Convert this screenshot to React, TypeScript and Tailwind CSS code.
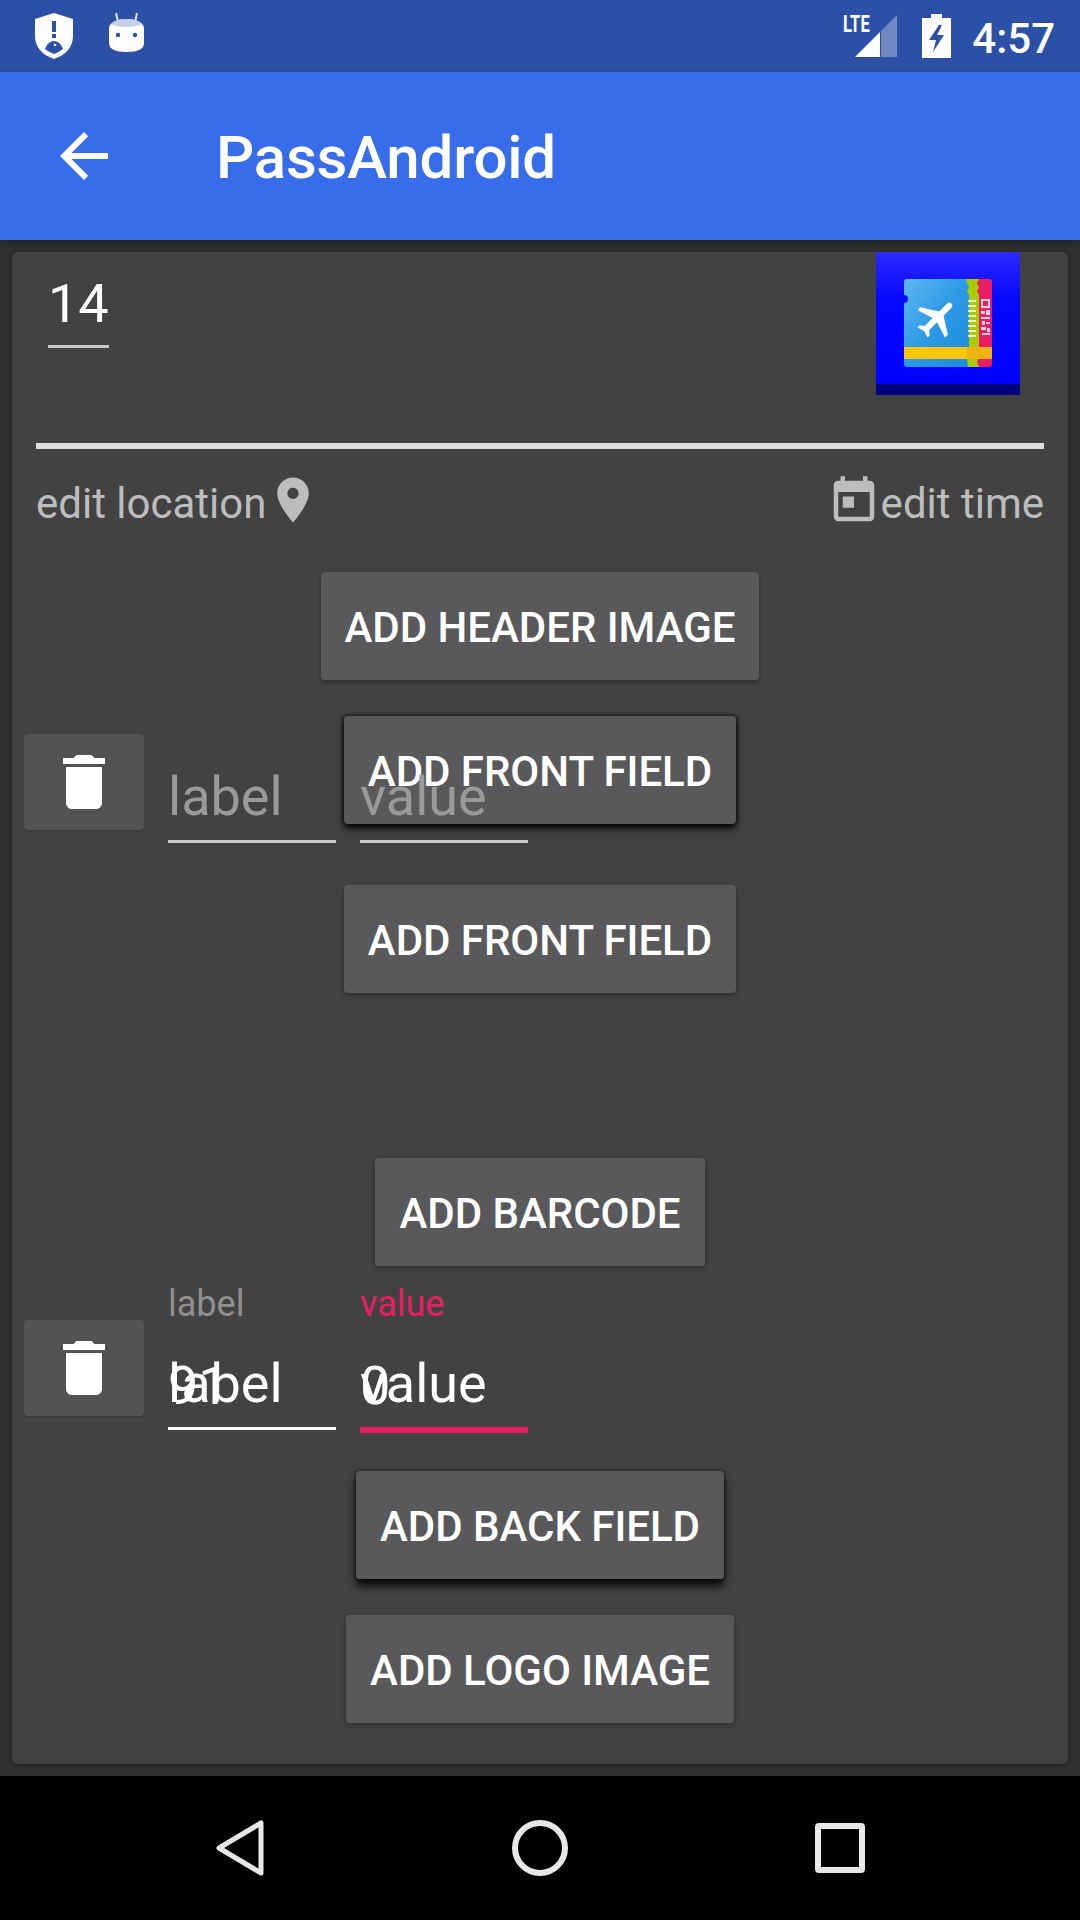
const ActionButton = ({ label, shadow, className = '' }: { label: string; shadow?: string; className?: string }) => (
  <div
    className={`flex h-[108px] items-center justify-center rounded-[4px] bg-[#59595b] px-6 pt-1 text-[42px] font-medium leading-none tracking-[-0.03px] text-white ${
      shadow ?? 'shadow-[0_2px_5px_rgba(0,0,0,0.3)]'
    } ${className}`}
  >
    {label}
  </div>
);

const TrashButton = ({ className = '' }: { className?: string }) => (
  <div className={`flex h-[96px] w-[120px] shrink-0 items-center justify-center rounded-[4px] bg-[#535355] shadow-[0_1px_2px_rgba(0,0,0,0.15)] ${className}`}>
    <svg viewBox="0 0 24 24" className="h-[72px] w-[72px] fill-white">
      <path d="M6 19c0 1.1.9 2 2 2h8c1.1 0 2-.9 2-2V7H6v12zM19 4h-3.5l-1-1h-5l-1 1H5v2h14V4z" />
    </svg>
  </div>
);

const HintField = ({ hint }: { hint: string }) => (
  <div className="w-[168px] border-b-[3px] border-[#c8c8c8] pb-[13px] text-[54px] leading-[60px] text-[#9a9a9a]">
    {hint}
  </div>
);

const FilledField = ({ hint, value, focused }: { hint: string; value: string; focused?: boolean }) => (
  <div className="w-[168px]">
    <div className={`text-[36px] leading-[40px] ${focused ? 'text-[#e91e63]' : 'text-[#8f8f8f]'}`}>{hint}</div>
    <div
      className={`relative mt-[30px] pb-[13px] text-[54px] leading-[60px] text-white ${
        focused ? 'border-b-[6px] border-[#e91e63]' : 'border-b-[3px] border-white'
      }`}
    >
      {hint}
      <span className="absolute left-0 top-[2px]">{value}</span>
    </div>
  </div>
);

const TicketImage = () => (
  <svg viewBox="0 0 144 143" className="h-[143px] w-[144px] shrink-0">
    <defs>
      <linearGradient id="sky" x1="0" y1="0" x2="0" y2="1">
        <stop offset="0" stopColor="#2b2bff" />
        <stop offset="0.35" stopColor="#0808ff" />
        <stop offset="1" stopColor="#0000ff" />
      </linearGradient>
      <linearGradient id="ticket" x1="0" y1="0" x2="1" y2="1">
        <stop offset="0" stopColor="#5db7f1" />
        <stop offset="0.5" stopColor="#2c9ae6" />
        <stop offset="1" stopColor="#1b8bdc" />
      </linearGradient>
    </defs>
    <rect width="144" height="132" fill="url(#sky)" />
    <rect y="132" width="144" height="11" fill="#00007f" />
    <path d="M100 27h13a3 3 0 0 1 3 3v82a3 3 0 0 1-3 3h-13z" fill="#e91e63" />
    <path d="M88 27h15l-2 4 2 4-2 4 2 4v63l-2 4 2 5H88z" fill="#a8cc00" />
    <path d="M31 27h59l1 4 2 4-2 4 2 4v60l-2 4 1 8H31a3 3 0 0 1-3-3V51a4 4 0 0 0 0-8V30a3 3 0 0 1 3-3z" fill="url(#ticket)" />
    <rect x="28" y="95" width="63" height="12" fill="#ffc60b" />
    <rect x="91" y="95" width="25" height="12" fill="#edb40f" />
    <g fill="#e8f0d0">
      <rect x="92" y="48" width="8" height="2" />
      <rect x="92" y="53" width="8" height="2" />
      <rect x="92" y="58" width="8" height="2" />
      <rect x="92" y="63" width="8" height="2" />
      <rect x="92" y="68" width="8" height="2" />
      <rect x="92" y="73" width="8" height="2" />
      <rect x="92" y="78" width="8" height="2" />
      <rect x="92" y="83" width="8" height="2" />
    </g>
    <g fill="#fbd3e0">
      <path d="M105 47h9v9h-9zm2 2v5h5v-5z" fillRule="evenodd" />
      <rect x="105" y="59" width="4" height="3" />
      <rect x="110" y="58" width="4" height="5" />
      <rect x="105" y="65" width="9" height="2" />
      <rect x="106" y="69" width="3" height="4" />
      <rect x="110" y="70" width="4" height="2" />
      <rect x="105" y="75" width="5" height="3" />
      <rect x="111" y="76" width="3" height="4" />
      <rect x="106" y="81" width="8" height="2" />
    </g>
    <g transform="translate(61 66) rotate(45) scale(2.05) translate(-11.5 -12)">
      <path fill="#fff" d="M21 16v-2l-8-5V3.500c0-.83-.67-1.500-1.500-1.500S10 2.670 10 3.500V9l-8 5v2l8-2.500V19l-2 1.500V22l3.500-1 3.500 1v-1.500L13 19v-5.500l8 2.500z" />
    </g>
  </svg>
);

const StatusIcons = () => (
  <div className="flex items-start gap-[36px]">
    <svg viewBox="0 0 38 46" className="mt-[13px] h-[46px] w-[38px]">
      <path d="M19 0l19 6v17c0 12-8 19-19 23C8 42 0 35 0 23V6z" fill="#fff" />
      <rect x="17" y="8" width="4" height="11" fill="#2c50a6" />
      <rect x="17" y="21" width="4" height="4" fill="#2c50a6" />
      <path d="M10 36c2-5 5-8 9-8s7 3 9 8c-3 2-6 4-9 5-3-1-6-3-9-5z" fill="#2c50a6" />
      <circle cx="20" cy="32" r="1.3" fill="#fff" />
    </svg>
    <svg viewBox="0 0 35 40" className="mt-[12px] h-[40px] w-[35px]">
      <path d="M7 1l2 9M28 1l-2 9" stroke="#dfe5f3" strokeWidth="2" />
      <path d="M0 16C0 11 8 7 17.500 7S35 11 35 16v15c0 6-6 9-17.500 9S0 37 0 31z" fill="#fff" />
      <path d="M2 12c2-3 8-5 15.500-5S31 9 33 12c-4 2-9 3-15.500 3S6 14 2 12z" fill="#c5d0e8" />
      <circle cx="9" cy="23" r="2.200" fill="#2c50a6" />
      <circle cx="26" cy="23" r="2.200" fill="#2c50a6" />
    </svg>
  </div>
);

const StatusRight = () => (
  <div className="flex items-start">
    <div className="relative h-[72px] w-[53px]">
      <span className="absolute -left-[1px] top-[13px] origin-top-left scale-x-[0.72] text-[23px] font-bold leading-[24px] text-white">LTE</span>
      <svg viewBox="0 0 42 42" className="absolute left-[11px] top-[15px] h-[42px] w-[42px]">
        <path d="M42 0v42H26V16z" fill="#fff" fillOpacity="0.32" />
        <path d="M25 17v25H0z" fill="#fff" />
      </svg>
    </div>
    <svg viewBox="0 0 29 44" className="ml-[25px] mt-[14px] h-[44px] w-[29px]">
      <path fillRule="evenodd" fill="#fff" d="M9 0h11v4h9v40H0V4h9zM17 11L7 26h7l-3 12 11-17h-7l5-10z" />
    </svg>
    <span className="ml-[21px] mt-[15px] text-[42px] font-medium leading-[48px] text-white">4:57</span>
  </div>
);

export default function App() {
  return (
    <div className="flex h-[1920px] w-[1080px] flex-col overflow-hidden bg-[#303030] font-['Roboto',sans-serif]">
      <div className="flex h-[72px] shrink-0 items-start justify-between bg-[#2c50a6] pl-[35px] pr-[25px]">
        <StatusIcons />
        <StatusRight />
      </div>

      <div className="z-10 flex h-[168px] shrink-0 items-center bg-[#376dea] pl-[48px] shadow-[0_3px_8px_rgba(0,0,0,0.3)]">
        <svg viewBox="0 0 24 24" className="h-[72px] w-[72px] fill-white">
          <path d="M20 11H7.830l5.590-5.590L12 4l-8 8 8 8 1.410-1.410L7.830 13H20v-2z" />
        </svg>
        <span className="ml-[96px] pt-1 text-[60px] font-medium leading-none tracking-[-0.2px] text-white">PassAndroid</span>
      </div>

      <div className="flex min-h-0 flex-1 flex-col px-3 py-3">
        <div className="relative flex h-[1512px] flex-col items-center rounded-[6px] bg-[#424242] shadow-[0_1px_4px_rgba(0,0,0,0.35)]">
          <div className="flex h-[191px] w-full items-start justify-between pl-[36px] pr-[48px]">
            <div className="mt-[22px] border-b-[3px] border-[#c8c8c8] pb-[11px] text-[54px] leading-[60px] text-white">14</div>
            <TicketImage />
          </div>

          <div className="h-[6px] w-[1008px] bg-[#dedede]" />

          <div className="mt-[24px] flex h-[54px] w-[1008px] items-start justify-between text-[42px] leading-[48px] text-[#bdbdbd]">
            <div className="flex items-start">
              <span className="mt-[7px]">edit location</span>
              <svg viewBox="0 0 24 24" className="h-[54px] w-[54px] fill-[#bdbdbd]">
                <path d="M12 2C8.130 2 5 5.130 5 9c0 5.250 7 13 7 13s7-7.750 7-13c0-3.870-3.130-7-7-7zm0 9.500c-1.380 0-2.500-1.120-2.500-2.500s1.120-2.500 2.500-2.500 2.500 1.120 2.500 2.500-1.120 2.500-2.500 2.500z" />
              </svg>
            </div>
            <div className="flex items-start">
              <svg viewBox="0 0 24 24" className="mt-[1px] h-[54px] w-[54px] fill-[#bdbdbd]">
                <path d="M19 3h-1V1h-2v2H8V1H6v2H5c-1.110 0-1.990.9-1.990 2L3 19c0 1.100.890 2 2 2h14c1.100 0 2-.9 2-2V5c0-1.100-.9-2-2-2zm0 16H5V8h14v11zM7 10h5v5H7z" />
              </svg>
              <span className="mt-[7px]">edit time</span>
            </div>
          </div>

          <ActionButton label="ADD HEADER IMAGE" className="mt-[45px]" />
          <ActionButton
            label="ADD FRONT FIELD"
            shadow="shadow-[0_0_3px_2px_rgba(0,0,0,0.45),0_5px_7px_rgba(0,0,0,0.8)]"
            className="mt-[36px]"
          />

          {/* first field row sits on top of the pressed button */}
          <div className="absolute left-3 top-[482px] flex gap-6">
            <TrashButton />
            <div className="mt-[33px] flex gap-6">
              <HintField hint="label" />
              <HintField hint="value" />
            </div>
          </div>

          <ActionButton label="ADD FRONT FIELD" className="mt-[61px]" />
          <ActionButton label="ADD BARCODE" className="mt-[165px]" />

          <div className="mt-[18px] flex w-full gap-6 px-3">
            <TrashButton className="mt-[36px]" />
            <FilledField hint="label" value="91" />
            <FilledField hint="value" value="0" focused />
          </div>

          <ActionButton
            label="ADD BACK FIELD"
            shadow="shadow-[0_0_3px_1px_rgba(0,0,0,0.4),0_7px_8px_rgba(0,0,0,0.9)]"
            className="mt-[38px]"
          />
          <ActionButton label="ADD LOGO IMAGE" className="mt-[36px]" />
        </div>
      </div>

      <div className="flex h-[144px] shrink-0 items-center justify-center bg-black">
        <div className="flex w-[300px] justify-center">
          <svg viewBox="0 0 48 56" className="h-[56px] w-[48px] fill-none stroke-[#e8e8e8] stroke-[5]">
            <path d="M45 3v50L3 28z" strokeLinejoin="round" />
          </svg>
        </div>
        <div className="flex w-[300px] justify-center">
          <div className="h-[56px] w-[56px] rounded-full border-[6px] border-[#e8e8e8]" />
        </div>
        <div className="flex w-[300px] justify-center">
          <div className="h-[50px] w-[50px] rounded-[4px] border-[6px] border-[#e8e8e8]" />
        </div>
      </div>
    </div>
  );
}
